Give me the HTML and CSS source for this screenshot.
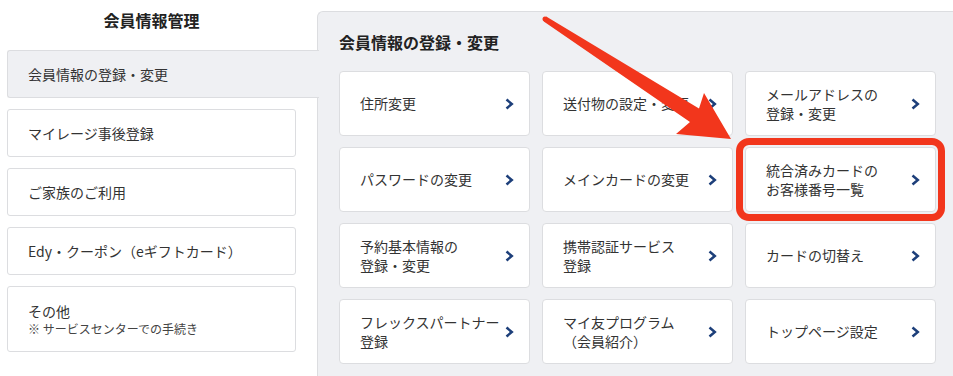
FILE: index.html
```html
<!DOCTYPE html>
<html lang="ja">
<head>
  <meta charset="UTF-8" />
  <meta name="viewport" content="width=device-width, initial-scale=1.0" />
  <title>会員情報管理</title>
  <link rel="stylesheet" href="styles.css">
</head>
<body>
  <div class="page">
    <aside class="sidebar">
      <div class="side-title">会員情報管理</div>
      <a class="side-item active" href="#">会員情報の登録・変更</a>
      <a class="side-item" href="#">マイレージ事後登録</a>
      <a class="side-item" href="#">ご家族のご利用</a>
      <a class="side-item" href="#">Edy・クーポン（eギフトカード）</a>
      <a class="side-item multi" href="#">
        <span class="main">その他</span>
        <span class="note">※ サービスセンターでの手続き</span>
      </a>
    </aside>

    <section class="panel">
      <h2 class="panel-title">会員情報の登録・変更</h2>
      <div class="cards">
        <a class="card" href="#"><span>住所変更</span><svg class="chev" viewBox="0 0 9 12"><polyline points="1.5,1.5 6.8,6 1.5,10.5"/></svg></a>
        <a class="card" href="#"><span>送付物の設定・変更</span><svg class="chev" viewBox="0 0 9 12"><polyline points="1.5,1.5 6.8,6 1.5,10.5"/></svg></a>
        <a class="card" href="#"><span>メールアドレスの<br>登録・変更</span><svg class="chev" viewBox="0 0 9 12"><polyline points="1.5,1.5 6.8,6 1.5,10.5"/></svg></a>
        <a class="card" href="#"><span>パスワードの変更</span><svg class="chev" viewBox="0 0 9 12"><polyline points="1.5,1.5 6.8,6 1.5,10.5"/></svg></a>
        <a class="card" href="#"><span>メインカードの変更</span><svg class="chev" viewBox="0 0 9 12"><polyline points="1.5,1.5 6.8,6 1.5,10.5"/></svg></a>
        <a class="card marked" href="#"><span>統合済みカードの<br>お客様番号一覧</span><svg class="chev" viewBox="0 0 9 12"><polyline points="1.5,1.5 6.8,6 1.5,10.5"/></svg></a>
        <a class="card" href="#"><span>予約基本情報の<br>登録・変更</span><svg class="chev" viewBox="0 0 9 12"><polyline points="1.5,1.5 6.8,6 1.5,10.5"/></svg></a>
        <a class="card" href="#"><span>携帯認証サービス<br>登録</span><svg class="chev" viewBox="0 0 9 12"><polyline points="1.5,1.5 6.8,6 1.5,10.5"/></svg></a>
        <a class="card" href="#"><span>カードの切替え</span><svg class="chev" viewBox="0 0 9 12"><polyline points="1.5,1.5 6.8,6 1.5,10.5"/></svg></a>
        <a class="card" href="#"><span>フレックスパートナー<br>登録</span><svg class="chev" viewBox="0 0 9 12"><polyline points="1.5,1.5 6.8,6 1.5,10.5"/></svg></a>
        <a class="card" href="#"><span>マイ友プログラム<br>（会員紹介）</span><svg class="chev" viewBox="0 0 9 12"><polyline points="1.5,1.5 6.8,6 1.5,10.5"/></svg></a>
        <a class="card" href="#"><span>トップページ設定</span><svg class="chev" viewBox="0 0 9 12"><polyline points="1.5,1.5 6.8,6 1.5,10.5"/></svg></a>
      </div>
    </section>
  </div>

  <!-- annotation arrow drawn over the page -->
  <svg class="callout" viewBox="0 0 953 376">
    <polygon points="546.2,16.6 699,108.6 704,93 731,139 676,134 690,122 543.8,21.4"/>
    <circle cx="545" cy="19" r="2.5"/>
  </svg>
</body>
</html>
```

FILE: styles.css
```css
body {
  margin: 0;
  font-family: "Noto Sans CJK JP", "Noto Sans", sans-serif;
  color: #333;
  background: #fff;
  overflow: hidden;
}
a {
  color: inherit;
  text-decoration: none;
}
.page {
  display: flex;
  padding-left: 7px;
  height: 376px;
}
.sidebar {
  width: 310px;
  flex-shrink: 0;
  display: flex;
  flex-direction: column;
  gap: 11px;
}
.side-title {
  height: 39px;
  line-height: 40px;
  text-align: center;
  font-size: 16px;
  font-weight: bold;
  width: 289px;
  color: #222;
}
.side-item {
  width: 289px;
  box-sizing: border-box;
  height: 48px;
  padding: 0 20px;
  display: flex;
  align-items: center;
  font-size: 14px;
  border: 1px solid #dcdde0;
  border-radius: 3px;
  background: #fff;
}
.side-item.active {
  width: 312px;
  margin-right: -1px;
  position: relative;
  z-index: 1;
  background: #eff0f3;
  border-right: none;
  border-radius: 3px 0 0 3px;
}
.side-item.multi {
  height: 66px;
  flex-direction: column;
  align-items: flex-start;
  justify-content: center;
}
.side-item .main {
  line-height: 20px;
}
.side-item .note {
  font-size: 12px;
  line-height: 16px;
  color: #444;
}
.panel {
  flex: 1;
  margin-top: 11px;
  background: #eff0f3;
  border-top: 1px solid #dcdde0;
  border-left: 1px solid #dcdde0;
  border-top-left-radius: 6px;
  padding: 18px 0 0 21px;
}
.panel-title {
  margin: 0 0 17px;
  font-size: 16px;
  line-height: 24px;
  font-weight: bold;
  color: #222;
}
.cards {
  display: grid;
  grid-template-columns: repeat(3, 191px);
  grid-auto-rows: 65px;
  column-gap: 12px;
  row-gap: 11px;
}
.card {
  display: flex;
  align-items: center;
  justify-content: space-between;
  box-sizing: border-box;
  padding: 0 15px 0 20px;
  background: #fff;
  border: 1px solid #dcdde0;
  border-radius: 4px;
  font-size: 14px;
  line-height: 19px;
}
.card.marked {
  outline: 7px solid #f2361c;
  outline-offset: 2px;
}
.chev {
  width: 9px;
  height: 12px;
  flex-shrink: 0;
  fill: none;
  stroke: #1d3f7a;
  stroke-width: 2.5;
}
.callout {
  position: absolute;
  left: 0;
  top: 0;
  width: 953px;
  height: 376px;
  pointer-events: none;
  fill: #f2361c;
}
```
